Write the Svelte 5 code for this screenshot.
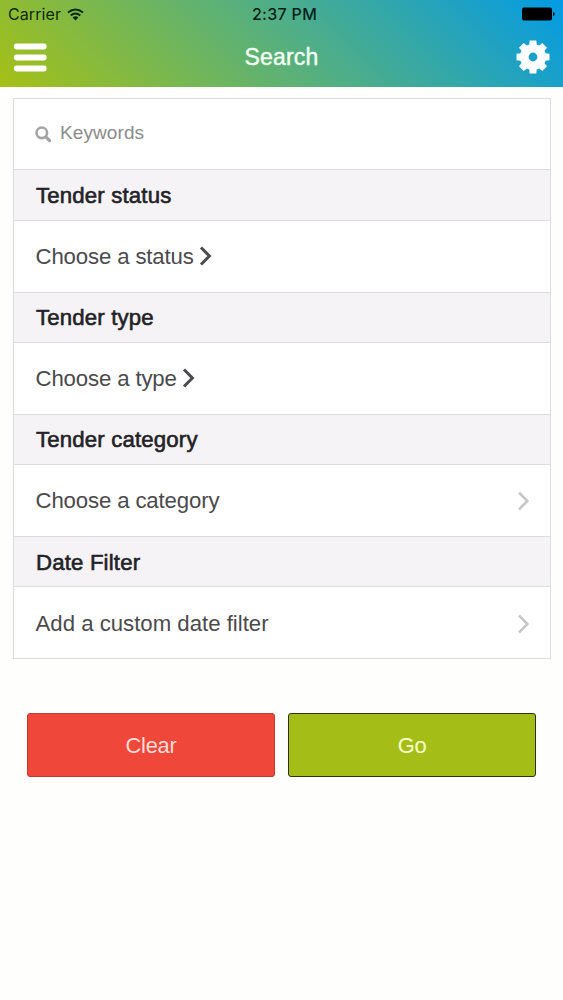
<script lang="ts">
  interface Section {
    title: string;
    label: string;
    inline: boolean;
  }

  const sections: Section[] = [
    { title: 'Tender status', label: 'Choose a status', inline: true },
    { title: 'Tender type', label: 'Choose a type', inline: true },
    { title: 'Tender category', label: 'Choose a category', inline: false },
    { title: 'Date Filter', label: 'Add a custom date filter', inline: false },
  ];

  const teeth = [0, 45, 90, 135, 180, 225, 270, 315];

  let keywords = $state('');
</script>

<div class="screen">
  <header>
    <div class="status-bar">
      <div class="carrier">
        <span>Carrier</span>
        <svg width="17" height="13" viewBox="0 0 17 13" fill="none" stroke="#0b2a10" stroke-width="2">
          <path d="M1 4.6Q8.5 -1.7 16 4.6" />
          <path d="M3.7 7.5Q8.5 3.5 13.3 7.5" />
          <path d="M5.6 9.4Q8.5 7 11.4 9.4L8.5 12.4Z" fill="#0b2a10" stroke="none" />
        </svg>
      </div>
      <span class="time">2:37 PM</span>
      <svg class="battery" width="33" height="14" viewBox="0 0 33 14">
        <rect x="0" y="0.4" width="30" height="13" rx="2" />
        <path d="M31 5Q32.8 5.4 32.8 7Q32.8 8.6 31 9Z" />
      </svg>
    </div>
    <div class="nav-bar">
      <button class="icon-button" aria-label="Menu">
        <svg width="33" height="29" viewBox="0 0 33 29" fill="#fff">
          <rect y="0.4" width="32.6" height="6" rx="2.4" />
          <rect y="11.4" width="32.6" height="6" rx="2.4" />
          <rect y="22.4" width="32.6" height="6" rx="2.4" />
        </svg>
      </button>
      <h1>Search</h1>
      <button class="icon-button" aria-label="Settings">
        <svg width="34" height="34" viewBox="-17 -17 34 34">
          {#each teeth as angle}
            <path d="M-4 -10L-3.3 -16.5H3.3L4 -10Z" fill="#fff" transform={`rotate(${angle})`} />
          {/each}
          <circle r="8.7" fill="none" stroke="#fff" stroke-width="8.6" />
        </svg>
      </button>
    </div>
  </header>

  <main>
    <div class="card">
      <label class="keywords">
        <svg width="17" height="17" viewBox="0 0 17 17" fill="none" stroke="#a3a3a3">
          <circle cx="6.8" cy="6.8" r="5.3" stroke-width="2.6" />
          <path d="M10.8 10.8L14.6 14.6" stroke-width="3.2" stroke-linecap="round" />
        </svg>
        <input type="text" placeholder="Keywords" bind:value={keywords} />
      </label>
      {#each sections as section}
        <h2>{section.title}</h2>
        <button class="row" class:inline={section.inline}>
          <span>{section.label}</span>
          <svg width="13" height="20" viewBox="0 0 13 20" fill="none" stroke="currentColor">
            <path d="M2 1.5L10.4 10L2 18.5" />
          </svg>
        </button>
      {/each}
    </div>

    <div class="actions">
      <button class="clear" onclick={() => (keywords = '')}>Clear</button>
      <button class="go">Go</button>
    </div>
  </main>
</div>

<style>
  :global(body) {
    margin: 0;
    background: #fefefd;
  }
  .screen {
    min-height: 1000px;
    font-family: "Liberation Sans", Arial, sans-serif;
    font-size: 22.2px;
    color: #4b4a4d;
  }
  button {
    font: inherit;
    color: inherit;
    cursor: pointer;
  }
  svg {
    display: block;
    flex: none;
  }
  header {
    height: 87px;
    background: linear-gradient(45deg, #a5c015, #56b07e 50%, #039be5);
  }
  .status-bar {
    display: grid;
    grid-template-columns: 1fr auto 1fr;
    align-items: center;
    height: 28px;
    padding: 0 8px;
    font-family: Inter, sans-serif;
    font-size: 16px;
    color: #0b2a10;
  }
  .carrier {
    display: flex;
    align-items: center;
    gap: 6px;
    letter-spacing: 0.1px;
  }
  .time {
    color: #05201a;
    font-weight: 500;
    letter-spacing: 0.3px;
    padding-left: 6px;
  }
  .battery {
    justify-self: end;
    fill: #000;
  }
  .nav-bar {
    display: grid;
    grid-template-columns: 1fr auto 1fr;
    align-items: center;
    height: 58px;
    padding: 0 13px 0 14px;
  }
  .icon-button {
    padding: 0;
    border: 0;
    background: none;
  }
  .icon-button:last-child {
    justify-self: end;
  }
  .icon-button:first-child {
    justify-self: start;
  }
  h1 {
    margin: 0;
    padding: 1px 1px 0 0;
    font-size: 23px;
    font-weight: 400;
    letter-spacing: 0.2px;
    color: #f4fff4;
    -webkit-text-stroke: 0.4px #f4fff4;
  }
  main {
    padding: 11px 12px 0 13px;
  }
  .card {
    box-sizing: border-box;
    border: 1px solid #dddddf;
    background: #fff;
  }
  .keywords {
    display: flex;
    align-items: center;
    gap: 8px;
    box-sizing: border-box;
    height: 70.4px;
    padding: 0 21px;
  }
  .keywords svg {
    margin-top: 1px;
  }
  .keywords input {
    flex: 1;
    min-width: 0;
    padding: 0 0 2px;
    border: 0;
    outline: 0;
    background: none;
    font: inherit;
    font-size: 19px;
    letter-spacing: 0.1px;
    color: #4b4a4d;
  }
  .keywords input::placeholder {
    color: #8b8b8b;
    opacity: 1;
  }
  h2 {
    display: flex;
    align-items: center;
    box-sizing: border-box;
    height: 51.2px;
    margin: 0;
    padding: 2px 22px 0;
    border: solid #dddddf;
    border-width: 1px 0;
    background: #f5f3f6;
    font-size: 22.2px;
    font-weight: 400;
    letter-spacing: 0.17px;
    color: #232226;
    -webkit-text-stroke: 0.6px #232226;
  }
  .row {
    display: flex;
    align-items: center;
    justify-content: space-between;
    box-sizing: border-box;
    width: 100%;
    height: 71px;
    padding: 2px 20px 0 21.5px;
    border: 0;
    background: #fff;
    text-align: left;
    letter-spacing: -0.14px;
  }
  .row:last-child {
    letter-spacing: 0;
  }
  .row svg {
    color: #c7c7c9;
    stroke-width: 2.5;
  }
  .row.inline {
    justify-content: flex-start;
    gap: 5px;
  }
  .row.inline svg {
    margin-top: -2px;
    color: #4b4a4d;
    stroke-width: 3;
  }
  .actions {
    display: flex;
    gap: 13px;
    padding: 54px 15px 0 14px;
  }
  .actions button {
    flex: 1;
    height: 64px;
    padding: 2px 0 0;
    border: 1px solid;
    border-radius: 3px;
    font-size: 21.8px;
    letter-spacing: -0.2px;
  }
  .actions .clear {
    border-color: #c23a30;
    background: #ef473a;
    color: #ffdcd6;
  }
  .actions .go {
    border-color: #2c3310;
    background: #a5be17;
    color: #f8ffcb;
  }
</style>
